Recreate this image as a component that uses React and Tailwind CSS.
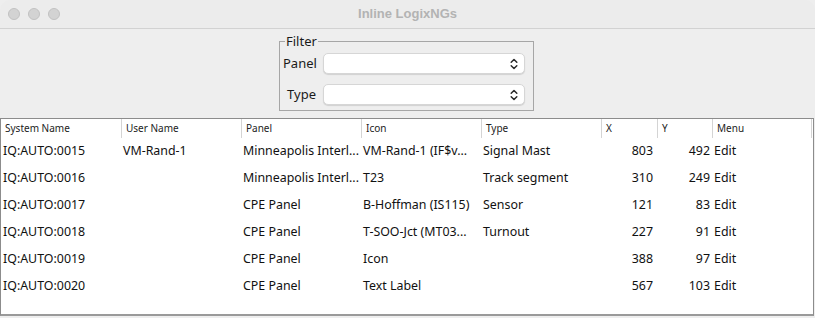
import React from 'react';

const columns = [
  { key: 'system', label: 'System Name', w: 'w-[120px]' },
  { key: 'user', label: 'User Name', w: 'w-[120px]' },
  { key: 'panel', label: 'Panel', w: 'w-[120px]' },
  { key: 'icon', label: 'Icon', w: 'w-[120px]' },
  { key: 'type', label: 'Type', w: 'w-[120px]' },
  { key: 'x', label: 'X', w: 'w-[56px]' },
  { key: 'y', label: 'Y', w: 'w-[55px]' },
  { key: 'menu', label: 'Menu', w: 'flex-1' },
];

const rows = [
  { system: 'IQ:AUTO:0015', user: 'VM-Rand-1', panel: 'Minneapolis Interl...', icon: 'VM-Rand-1 (IF$v...', type: 'Signal Mast', x: 803, y: 492 },
  { system: 'IQ:AUTO:0016', user: '', panel: 'Minneapolis Interl...', icon: 'T23', type: 'Track segment', x: 310, y: 249 },
  { system: 'IQ:AUTO:0017', user: '', panel: 'CPE Panel', icon: 'B-Hoffman (IS115)', type: 'Sensor', x: 121, y: 83 },
  { system: 'IQ:AUTO:0018', user: '', panel: 'CPE Panel', icon: 'T-SOO-Jct (MT03...', type: 'Turnout', x: 227, y: 91 },
  { system: 'IQ:AUTO:0019', user: '', panel: 'CPE Panel', icon: 'Icon', type: '', x: 388, y: 97 },
  { system: 'IQ:AUTO:0020', user: '', panel: 'CPE Panel', icon: 'Text Label', type: '', x: 567, y: 103 },
];

const Chevrons = () => (
  <svg width="8" height="12" viewBox="0 0 8 12" fill="none" stroke="#2a2a2a" strokeWidth="1.5" strokeLinecap="round" strokeLinejoin="round">
    <path d="M1.2 4.3 L4 1.5 L6.8 4.3" />
    <path d="M1.2 7.7 L4 10.5 L6.8 7.7" />
  </svg>
);

const Combo = () => (
  <div className="w-[202px] h-[21px] bg-white rounded-[5px] border border-[#d6d6d6] shadow-[0_1px_1px_rgba(0,0,0,0.12)] flex items-center justify-end pr-[6px]">
    <Chevrons />
  </div>
);

export default function App() {
  return (
    <div className="w-[815px] h-[318px] bg-[#eeeeee] flex flex-col overflow-hidden font-['Noto_Sans',sans-serif] text-[#1a1a1a]">
      {/* title bar */}
      <div className="h-[29px] shrink-0 bg-[#ececec] border-b border-[#d2d2d2] rounded-t-[10px] flex items-center relative">
        <div className="flex gap-[8px] pl-[8px]">
          <span className="w-[12px] h-[12px] rounded-full bg-[#d3d3d3] border border-[#c2c2c2]"></span>
          <span className="w-[12px] h-[12px] rounded-full bg-[#d3d3d3] border border-[#c2c2c2]"></span>
          <span className="w-[12px] h-[12px] rounded-full bg-[#d3d3d3] border border-[#c2c2c2]"></span>
        </div>
        <div className="absolute inset-0 flex items-center justify-center text-[13px] font-bold text-[#b3b3b3] font-['Liberation_Sans',sans-serif]">
          Inline LogixNGs
        </div>
      </div>

      {/* filter */}
      <div className="flex justify-center pt-[6px] h-[89px] shrink-0">
        <fieldset className="ml-[-2px] w-[255px] border border-[#a6a6a6] pl-[3px] pr-[8px] pb-[5px] pt-0 m-0 self-start">
          <legend className="px-[1px] ml-[2px] text-[13px] leading-[13px]">Filter</legend>
          <div className="flex flex-col gap-[10px] mt-[5px]">
            <div className="flex items-center gap-[7px]">
              <span className="w-[33px] text-[13px] text-right leading-[21px]">Panel</span>
              <Combo />
            </div>
            <div className="flex items-center gap-[7px]">
              <span className="w-[33px] text-[13px] text-right leading-[21px]">Type</span>
              <Combo />
            </div>
          </div>
        </fieldset>
      </div>

      {/* table */}
      <div className="w-[814px] h-[198px] shrink-0 bg-white border-t border-l border-r border-[#8c8c8c] border-b-2 border-b-[#9a9a9a] flex flex-col">
        <div className="flex h-[19px] text-[10px] text-[#222]">
          {columns.map((c, i) => (
            <div key={c.key} className={`${c.w} h-full flex items-center pl-[4px] ${i > 0 ? 'border-l border-[#d4d4d4]' : ''}`}>
              <span className="leading-[11px]">{c.label}</span>
            </div>
          ))}
          <div className="w-[2px] border-l border-[#d4d4d4]"></div>
        </div>
        {rows.map((r) => (
          <div key={r.system} className="flex h-[27px] items-center text-[12.4px] text-[#111]">
            <div className="w-[120px] pl-[2px] whitespace-nowrap overflow-hidden">{r.system}</div>
            <div className="w-[120px] pl-[2px] whitespace-nowrap overflow-hidden">{r.user}</div>
            <div className="w-[120px] pl-[2px] whitespace-nowrap overflow-hidden">{r.panel}</div>
            <div className="w-[120px] pl-[2px] whitespace-nowrap overflow-hidden">{r.icon}</div>
            <div className="w-[120px] pl-[2px] whitespace-nowrap overflow-hidden">{r.type}</div>
            <div className="w-[56px] pr-[4px] text-right">{r.x}</div>
            <div className="w-[55px] pr-[2px] text-right">{r.y}</div>
            <div className="flex-1 pl-[2px]">Edit</div>
          </div>
        ))}
      </div>
    </div>
  );
}
